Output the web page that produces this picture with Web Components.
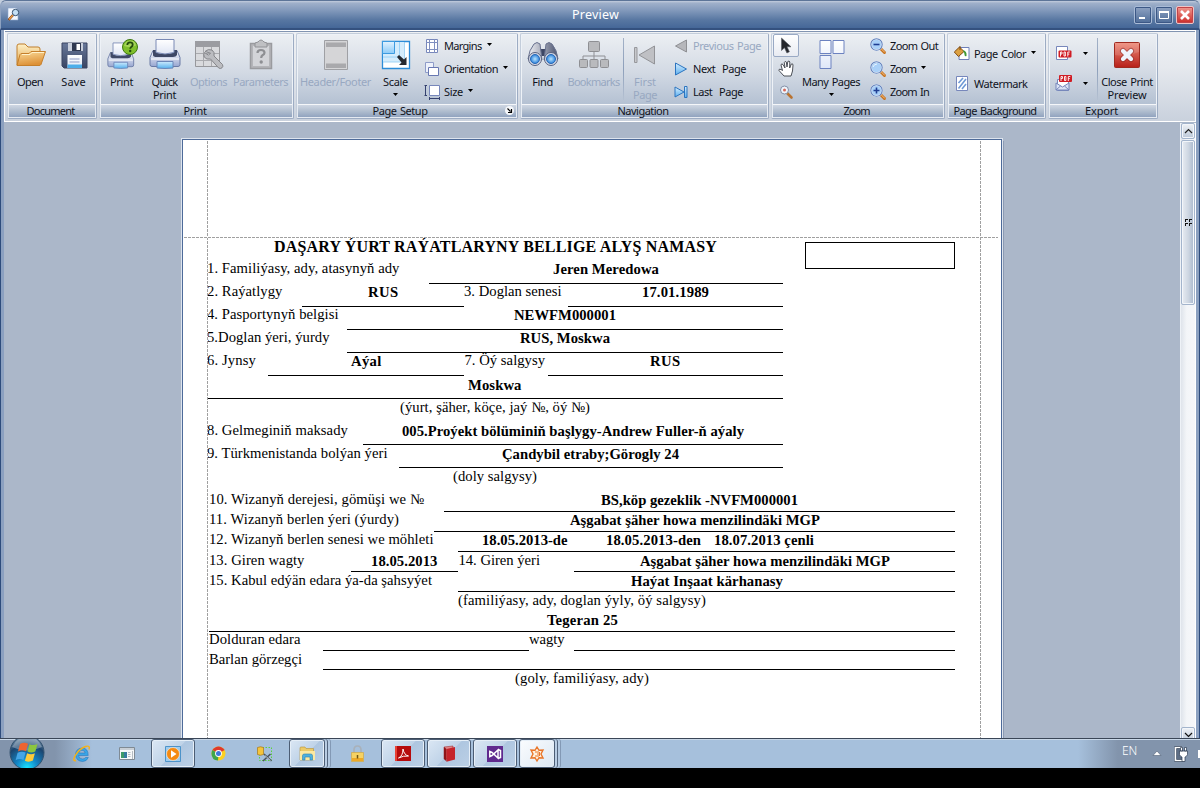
<!DOCTYPE html>
<html lang="tk">
<head>
<meta charset="utf-8">
<title>Preview</title>
<style>
html,body{margin:0;height:100%;background:#000;overflow:hidden}
body{font:11px/13px "Noto Sans",sans-serif;color:#10131c;word-spacing:1px}
</style>
</head>
<body>
<preview-desktop></preview-desktop>
<script>
const G = (id, a, b, x2 = 0, y2 = 1) => `<linearGradient id="${id}" x1="0" y1="0" x2="${x2}" y2="${y2}"><stop offset="0" stop-color="${a}"/><stop offset="1" stop-color="${b}"/></linearGradient>`;
const lens = inner => `<path d="M10.5 10.5l4 4" stroke="#c7711c" stroke-width="3" stroke-linecap="round"/><path d="M11 10.6l3.6 3.6" stroke="#f6c38a" stroke-width="1" stroke-linecap="round"/><circle cx="6.5" cy="6.5" r="5.6" fill="#a9d0f8" stroke="#fff" stroke-width="1.6"/><circle cx="6.5" cy="6.5" r="5.7" fill="none" stroke="#5b7dbb" stroke-width="1.1"/>${inner}`;
const printer = `<defs>${G('pb', '#fdfdff', '#97a6d0')}${G('pp', '#ffffff', '#dfe5f4')}${G('pt', '#cdeafd', '#56b1ee')}</defs><path d="M4 11.500h24l3 7v7q0 2-2 2H3q-2 0-2-2v-7z" fill="url(#pb)" stroke="#6a7aa5"/><path d="M4 11h24v5q-1 2-4 2H8q-4 0-4-2z" fill="#3e4866"/><path d="M7 .5h18v13q-9 3-18 0z" fill="url(#pp)" stroke="#7a8ab5"/><path d="M2 20h28" stroke="#fff"/><path d="M8 22.500h16v6.500q-8 1-16 0z" fill="url(#pt)" stroke="#6b86b8"/>`;
const pdfTag = (x, y) => `<rect x="${x}" y="${y}" width="13" height="7" rx="1" fill="#d01c24"/><path d="M${x + 2} ${y + 6}v-4.5h1.5v2h-1.5M${x + 5.5} ${y + 1.5}v4h1.4v-4zM${x + 9.3} ${y + 6}v-4.5h2M${x + 9.3} ${y + 3.6}h1.5" fill="none" stroke="#fff" stroke-width=".9"/>`;
/* name: [width, height, drawing] */
const ICONS = {
  app: [13, 15, `<path d="M1 1h8l2 2v10H1z" fill="#f4f8ff" stroke="#8fa7cc" stroke-width=".6"/><path d="M6 8l-4.500 5" stroke="#7b3c10" stroke-width="2.400"/><path d="M6 8l-4 4.500" stroke="#f0a04a" stroke-width="1.200"/><circle cx="8.500" cy="5.500" r="3.200" fill="#c5e0f6" stroke="#35506f"/>`],
  open: [31, 29, `<defs>${G('a', '#fdf0c8', '#e5a64a')}${G('b', '#fbdc9a', '#dd9137', .3)}</defs><path d="M2 25V6q0-2 2-2h6l3 3h10q2 0 2 2v16z" fill="url(#a)" stroke="#c07f2c"/><path d="M2 25.500l3-11q.5-1 2-1h7l2-2h14.500L26 24.500q-.5 1-2 1z" fill="url(#b)" stroke="#c57f2b"/><path d="M7 14.500h8l2-2h12" stroke="#fff2cb" fill="none"/>`],
  save: [32, 32, `<defs>${G('a', '#68789a', '#3a4563')}${G('p', '#ffffff', '#dfe8f6')}</defs><g transform="translate(1 1)"><path d="M3 3h25v25H5l-2-2z" fill="url(#a)" stroke="#3a4563"/><path d="M9 3h15v8H9z" fill="#c9cfdc"/><path d="M13 3h9v8h-9z" fill="#2f3850"/><path d="M17.500 4h3.500v6h-3.500z" fill="#fff"/><path d="M8.500 15h14.500v13H8.500z" fill="url(#p)"/><path d="M8.500 24.500h14.500V28H8.500z" fill="#4caeea"/><path d="M10.500 19h10M10.500 22h10" stroke="#8f9bc4"/></g>`],
  printer: [32, 32, printer],
  print: [34, 32, `<g transform="translate(2 3.500) scale(.86 .88)">${printer}</g><circle cx="25" cy="8" r="7.500" fill="#7fbf2c" stroke="#3f7a12"/><path d="M19 7q1-5 6-5.500t6 5q-6 3-12 .5z" fill="#b5e06a" opacity=".7"/><path d="M22.300 6q0-2.600 2.700-2.600t2.700 2.300q0 1.300-1.500 2.200-1 .7-1 1.900" fill="none" stroke="#234b0c" stroke-width="1.800"/><circle cx="25.200" cy="12" r="1.200" fill="#234b0c"/>`],
  options: [32, 32, `<path d="M2.500 2.500h24v25h-24z" fill="#d9dadd" stroke="#97989c"/><path d="M2 2h25v6H2z" fill="#9b9ca1"/><path d="M10.500 8v19M18.500 8v19M3 14.500h23M3 21.500h23" stroke="#a9aaae"/><path d="M12 12.500q3-3 7-1.500 3 2 2 6l8.500 8.500q1 2-.5 3.300t-3.300.2L17.500 20q-4 1-6.300-2-1-3 .3-4.500l4 2.700 2-2z" fill="#bbbcc0" stroke="#85868a"/>`],
  params: [24, 32, `<path d="M1.500 4.500h21v25h-21z" fill="#b4b5b9" stroke="#9a9b9f" stroke-width="1.500"/><path d="M4 7h16v20H4z" fill="#d3d4d8"/><path d="M6 4l3-1q3-4 6 0l3 1v4H6z" fill="#bfc0c3" stroke="#919296"/><path d="M8.500 14q0-3 3.500-3t3.500 2.700q0 1.500-2 2.600-1.300.8-1.300 2.700" fill="none" stroke="#8e8f93" stroke-width="2.200"/><circle cx="12.200" cy="23" r="1.700" fill="#8e8f93"/>`],
  header: [26, 32, `<path d="M1.500 1.500h23v29h-23z" fill="#d5d5d7" stroke="#9fa0a4"/><path d="M3 3.500h20v4.500H3zM3 24.500h20V29H3z" fill="#a9a9ac"/>`],
  scale: [30, 30, `<defs>${G('a', '#e3f3ff', '#8ccbf8')}</defs><path d="M1.500 1.500h27v27h-27z" fill="#fff" stroke="#2b8cd8" stroke-width="1.300"/><path d="M2 2h21v20H2z" fill="#d4ecfc"/><path d="M18.500 2v15H2M23.500 2v20H2" stroke="#8ecbf4" fill="none" stroke-width=".8"/><path d="M1.500 1.500h12v12h-12z" fill="url(#a)" stroke="#3d9be0"/><path d="M16 17l2-2 5 4.500 2.500-2.500V25H18l2.500-2.500z" fill="#252930"/>`],
  margins: [14, 16, `<path d="M1.500 1.500h11v13h-11z" fill="#fff" stroke="#7787bb"/><path d="M4.500 1v14M9.500 1v14M1 4.500h12M1 11.500h12" stroke="#8090c0"/>`],
  orient: [14, 14, `<path d="M.5.500h8v10h-8z" fill="#eef2fb" stroke="#8e9cc9"/><path d="M3.500 5.500h10v8h-10z" fill="#fff" stroke="#6878b2"/>`],
  size: [16, 16, `<path d="M4.500 1.500h10v10h-10z" fill="#fff" stroke="#7787bb"/><path d="M.5 1v11M-.5 1.500h2.500M-.5 11.500h2.500M4 14.500h10M4.500 13v3M14.500 13v3" stroke="#34416f"/>`],
  find: [32, 28, `<defs>${G('a', '#f3f4f8', '#4c5470', 1, 0)}<radialGradient id="l"><stop offset="0" stop-color="#b8e4ff"/><stop offset="1" stop-color="#2d82da"/></radialGradient></defs><path d="M12 8h8v7h-8z" fill="#3d4664"/><path d="M7 3q3-3 6 0l2 16-14-1q1-9 6-15zM25 3q-3-3-6 0l-2 16 14-1q-1-9-6-15z" fill="url(#a)" stroke="#69728f"/><circle cx="8" cy="18" r="6.500" fill="#d5d9e6" stroke="#59627f"/><circle cx="8" cy="18" r="4.500" fill="url(#l)" stroke="#2868b6"/><circle cx="24" cy="18" r="6.500" fill="#d5d9e6" stroke="#59627f"/><circle cx="24" cy="18" r="4.500" fill="url(#l)" stroke="#2868b6"/>`],
  marks: [32, 28, `<path d="M16 11v4M5 19v-4h22v4M16 15v4" fill="none" stroke="#8f9095"/><g fill="#b9babd" stroke="#8e8f93"><rect x="10.500" y=".5" width="11" height="10" rx="1"/><rect x="1.500" y="18.500" width="8" height="8" rx="1"/><rect x="12" y="18.500" width="8" height="8" rx="1"/><rect x="22.500" y="18.500" width="8" height="8" rx="1"/></g>`],
  first: [22, 20, `<path d="M.5 2.500h2.500v15H.5z" fill="#c7c8cc" stroke="#97989c"/><path d="M20.500 1v18L5 10z" fill="#bfc0c4" stroke="#929397"/>`],
  prev: [14, 14, `<path d="M12.500 1v12L1.500 7z" fill="#b6b7bb" stroke="#8f9094"/>`],
  next: [14, 14, `<defs>${G('a', '#d8efff', '#5aaeee')}</defs><path d="M1.500 1v12l11-6z" fill="url(#a)" stroke="#2c74bf"/>`],
  last: [14, 14, `<defs>${G('a', '#d8efff', '#5aaeee')}</defs><path d="M1 2v10l9-5z" fill="url(#a)" stroke="#2c74bf"/><path d="M10.500 1.500h2.500v11h-2.500z" fill="url(#a)" stroke="#2c74bf"/>`],
  pointer: [12, 17, `<path d="M1.500 1v12.500l3-2.800 2.400 5.300 2.500-1.200L7 9.800h4z" fill="#24262b" stroke="#555a63" stroke-width=".6"/>`],
  hand: [17, 17, `<path d="M6 16L1 10.500q-.5-2 2-1l1.500 1L3 5q.3-2 2-.5L7 8 6.300 2.500q.8-2 2-.5l.7 5 .8-5.500q1.500-1.200 2 .5L11.700 8l1.600-4q1.600-.8 1.700 1L14.500 11l-1.500 5z" fill="#fff" stroke="#3b3e46" stroke-width=".9"/>`],
  magnify: [14, 14, `<path d="M8.500 8.500l4 4" stroke="#b97331" stroke-width="2.600" stroke-linecap="round"/><circle cx="5.500" cy="5" r="4" fill="#eef5fc" stroke="#8290a8"/><circle cx="5.500" cy="5" r="1.500" fill="#d86a5c"/>`],
  pages: [26, 31, `<defs>${G('a', '#ffffff', '#dfe7f8')}</defs><g transform="translate(1.500 1)" fill="url(#a)" stroke="#6c82c0"><path d="M.5.500h11v13H.5zM13.500 .5h11v13h-11zM.5 15.500h11v13H.5z"/></g>`],
  zoomout: [16, 16, lens('<path d="M3.500 6.500h6" stroke="#1f3e93" stroke-width="1.600"/>')],
  zoom: [16, 16, lens('<path d="M3 6q1-3 4-3" stroke="#e8f5ff" fill="none"/>')],
  zoomin: [16, 16, lens('<path d="M3.500 6.500h6M6.500 3.500v6" stroke="#1f3e93" stroke-width="1.600"/>')],
  color: [16, 14, `<path d="M4.500 1.500h9.500v12H4z" fill="#fff" stroke="#6f80b8"/><path d="M-.7 6L4.500 1 9 5.500 3.500 10.500z" fill="#dca041" stroke="#7f4a12"/><path d="M5 4V0" stroke="#7f4a12"/><path d="M8 4.500q4 0 3.500 5.500-2 1-2-1.500T8 5z" fill="#3f9a34"/>`],
  water: [13, 15, `<path d="M1.500.500h11v14h-11z" fill="#fff" stroke="#7787bb"/><path d="M3.500 7L8 2M3.500 12.500L11 3M7 13l4-5" stroke="#6f9ad6" stroke-width="1.600"/>`],
  pdf: [16, 15, `<path d="M.5 .5h11v13H.5z" fill="#fff" stroke="#7787bb"/>${pdfTag(2.500, 4.500)}`],
  pdfmail: [17, 16, `<path d="M1.500 4.500h11v11h-11z" fill="#fff" stroke="#7787bb"/><path d="M0 8l6.500 4L13 8v7H0z" fill="#dbe3f5" stroke="#7787bb"/><path d="M0 15l4.500-4M13 15l-4.500-4" stroke="#7787bb"/>${pdfTag(3, 0)}`],
  close: [28, 28, `<defs>${G('a', '#ee8a78', '#b71f19')}</defs><rect x="1.500" y="1.500" width="25" height="25" rx="1" fill="url(#a)" stroke="#9f2a20"/><path d="M2 2h24v9Q14 16 2 14z" fill="#fff" opacity=".12"/><path d="M10 10l8 8M18 10l-8 8" stroke="#7b1511" stroke-width="6" stroke-linecap="round" opacity=".5"/><path d="M10 10l8 8M18 10l-8 8" stroke="#eff3fc" stroke-width="4.400" stroke-linecap="round"/>`],
  arrow: [5, 3, `<path d="M0 0h5L2.500 3z" fill="#000"/>`],
  launch: [9, 9, `<circle cx="4.500" cy="4.500" r="4.500" fill="#f5f7fa"/><path d="M2.500 2.500l3 3M6.500 3v3.500H3" stroke="#000" fill="none" stroke-width="1.200"/>`],
  orb: [36, 30, `<defs><radialGradient id="o" cx=".5" cy=".95" r=".9"><stop offset="0" stop-color="#19e4ff"/><stop offset=".35" stop-color="#1486c6"/><stop offset=".75" stop-color="#1b446e"/><stop offset="1" stop-color="#6f8ba4"/></radialGradient></defs><circle cx="18" cy="13.500" r="17" fill="url(#o)" stroke="#33526f"/><path d="M3 8Q8-2 18-2.500T33 8Q18 15 3 8z" fill="#fff" opacity=".3"/><path d="M11 5q4-2.500 8-.3l-2 7.500q-4-2-8 .2z" fill="#ee6430"/><path d="M20.500 5.200q4 1.800 8-.2l-2.200 7.400q-4 2-7.800 0z" fill="#8cc63e"/><path d="M8.600 13.800q4-2.200 8-.2l-2.200 7.400q-3.800-2-7.800.2z" fill="#44a5e6"/><path d="M18.100 14.200q4 2 7.800 0l-2 7.300q-4 2.200-8 .2z" fill="#fdcb3a"/>`],
  ie: [18, 17, `<path d="M14.500 10.500h-9q.5 3.500 4 3.500 2 0 3-1.500h2.800Q13.800 16.500 9.500 16.500 3 16 2.500 9.500 3 3.200 9.300 3q6 .3 5.900 7.500zM5.600 8h6.500Q11.800 5.300 9 5.300T5.600 8z" fill="#3aa5e6" stroke="#1c6fb8" stroke-width=".5"/><path d="M3 15.500Q-1 16.500 2 11 6 4 12.500 1.500q5-1.500 3.500 3" fill="none" stroke="#f3b21b" stroke-width="1.500"/>`],
  win: [16, 13, `<path d="M.5.500h15v12H.5z" fill="#f6f8f9" stroke="#7f8a94"/><path d="M1 1h14v2H1z" fill="#c9d0d7"/><path d="M2 5h6v6H2z" fill="#357b9f"/><path d="M2 5h3v6H2z" fill="#3d9a69"/><path d="M9 5.500h2.500M9 7.500h2.500M9 9.500h2.500M13.500 4v8" stroke="#b5bcc3"/>`],
  wmp: [16, 16, `<path d="M.5.500h15v15H.5z" fill="#9fcbec" stroke="#4d93c9"/><circle cx="8" cy="8" r="6.500" fill="#f58a12" stroke="#fff" stroke-width=".5"/><path d="M6 4.300l5.500 3.700L6 11.700z" fill="#fff"/>`],
  chrome: [15, 15, `<circle cx="7.500" cy="7.500" r="7" fill="#fbd023"/><path d="M7.500 7.500L1.400 4Q4 .5 7.500.500t6.200 3.500z" fill="#df3a2c"/><path d="M1.400 4L7.500 7.500 7 14.500Q.5 14 .5 7.500.500 5.600 1.400 4z" fill="#3ea64a"/><circle cx="7.500" cy="7.500" r="3.400" fill="#fff"/><circle cx="7.500" cy="7.500" r="2.500" fill="#3d78d8"/>`],
  sql: [16, 16, `<path d="M2.500 1.500h12v13h-12z" fill="none" stroke="#5bd23c" stroke-dasharray="1.500 1.500"/><path d="M.5 1.500q3-1.500 6 0v7q-3 1.500-6 0z" fill="#f5c43c" stroke="#a3761c" stroke-width=".7"/><path d="M6 15l7.500-7M7 8l7.500 7" stroke="#4a535f" stroke-width="1.600"/><path d="M8 9.500l5.500 5" stroke="#dfe6ee" stroke-width=".7"/>`],
  folder: [17, 15, `<path d="M1 14V2q0-1 1-1h4l1 1.500h7.500V14z" fill="#eccb68" stroke="#b79238" stroke-width=".6"/><path d="M1 5h15v9H1z" fill="#fbe9a2"/><path d="M3.500 14V9.500q0-1.500 2-1.500h6q2 0 2 1.500V14h-2.500v-3H6v3z" fill="#4db1de" stroke="#2c82b4" stroke-width=".6"/>`],
  lock: [13, 17, `<path d="M3 8V5q0-4 3.500-4T10 5v3" fill="none" stroke="#a9b1ba" stroke-width="1.700"/><path d="M.5 7.500h12v9H.5z" fill="#f6d263" stroke="#cfa23a" stroke-width=".6"/><path d="M1 13h11v3H1z" fill="#eda928"/><path d="M6.500 10v3.500" stroke="#6d5314" stroke-width="1.500"/>`],
  acrobat: [16, 15, `<path d="M0 0h16v15H0z" fill="#b60b0c"/><path d="M0 0h2v15H0z" fill="#e84236"/><path d="M3.500 12q4.500-2 4.500-9 1 6 5.500 7-5-.5-10 2z" fill="none" stroke="#fff" stroke-width="1"/>`],
  book: [13, 16, `<path d="M1 1l9-1v12l-9 1z" fill="#e2888a" stroke="#991b1f" stroke-width=".5"/><path d="M1 1l2.500 2v12.500L1 13z" fill="#8f1519"/><path d="M3.500 3L12 1v12.500l-8.500 2.300z" fill="#c5242b"/>`],
  vs: [16, 16, `<path d="M0 0h16v16H0z" fill="#602a8e"/><path d="M2.800 5.500v5l2.200-1 6-5.500v8L5 6.500zM11 3.500l2.500 1v7L11 12.500" fill="none" stroke="#fff" stroke-width="1.500"/>`],
  dx: [16, 16, `<path d="M8 1l2 3.300 4-.3-2 4 2 4-4-.3L8 15l-2-3.300-4 .3 2-4-2-4 4 .3z" fill="#fff1df" stroke="#e9762a" stroke-width="1.400"/><path d="M6 6h4M6 10h4M8 8h2.500V6M10.500 8v2" fill="none" stroke="#e9762a"/>`],
  tri: [8, 5, `<path d="M0 4.500L4 0l4 4.500z" fill="#fff" stroke="#4f5e75" stroke-width=".6"/>`],
  plug: [14, 16, `<path d="M8 2H2.500V14H9.500" fill="none" stroke="#2b3b52" stroke-width="4"/><path d="M3 3h6v10H3z" fill="#5c6d85"/><path d="M8 1.500H1.500V14.500H9" fill="none" stroke="#fff" stroke-width="1.600"/><path d="M5.500 5h8v3.500q-1 2.500-2.500 2.500V15.500H8V11q-1.500 0-2.500-2.500zM6.500 1.500h2V5h-2zM10.500 1.500h2V5h-2z" fill="#fff" stroke="#2b3b52" stroke-width=".7"/>`],
  min: [12, 12, `<path d="M2 9h6" stroke="#fff" stroke-width="2"/>`],
  max: [12, 12, `<path d="M1.500 2.500h9v7h-9z" fill="none" stroke="#fff"/><path d="M1 3h10" stroke="#fff" stroke-width="2"/>`],
  x: [12, 12, `<path d="M2 2l8 8M10 2l-8 8" stroke="#fff" stroke-width="2.600"/>`],
  up: [9, 6, `<path d="M1 5l3.500-3.500L8 5" stroke="#222" fill="none" stroke-width="1.200"/>`],
  down: [9, 6, `<path d="M1 1l3.500 3.500L8 1" stroke="#111" fill="none" stroke-width="1.200"/>`]
};
const define = (name, html) => customElements.define(name, class extends HTMLElement {
  connectedCallback() {
    if (!this.shadowRoot) this.attachShadow({mode: 'open'}).innerHTML = html(this);
  }
});
const at = (e, n, d = '') => e.getAttribute(n) ?? d;

define('ui-icon', e => {
  const [w, h, body] = ICONS[at(e, 'name')];
  return `<style>:host{display:block;flex:none;width:${w}px;height:${h}px}svg{display:block;overflow:visible}</style><svg width="${w}" height="${h}" viewBox="0 0 ${w} ${h}" fill="none">${body}</svg>`;
});

define('big-button', e => {
  const lines = at(e, 'label').split('|'), fits = at(e, 'fit').split('|');
  return `<style>:host{display:flex;flex-direction:column;align-items:center;flex:none;width:${at(e, 'w')}px;color:${e.hasAttribute('off') ? '#98a8c1' : '#10131c'}}
  .pic{height:41px;display:flex;align-items:center;justify-content:center}.l{height:13px}.a{padding-top:5px}</style>
  <div class="pic"><ui-icon name="${at(e, 'icon')}"></ui-icon></div>
  ${lines.map((l, i) => `<div class="l"><fit-text w="${fits[i]}">${l}</fit-text></div>`).join('')}
  ${e.hasAttribute('menu') ? '<div class="a"><ui-icon name="arrow"></ui-icon></div>' : ''}`;
});

define('small-button', e => `<style>:host{display:flex;align-items:center;height:var(--row,23px)}.pic{width:var(--pic,19px);flex:none}.a{margin:var(--arrow,-2px 0 0 5px)}${e.hasAttribute('off') ? ':host{color:#98a8c1}' : ''}</style>
  <div class="pic"><ui-icon name="${at(e, 'icon')}"></ui-icon></div>
  ${at(e, 'label') && `<fit-text w="${at(e, 'fit')}">${at(e, 'label')}</fit-text>`}
  ${e.hasAttribute('menu') ? '<div class="a"><ui-icon name="arrow"></ui-icon></div>' : ''}`);

define('tool-button', e => `<style>:host{display:flex;align-items:center;justify-content:center;width:26px;height:23px;box-sizing:border-box}
  :host([on]){background:linear-gradient(#fff,#e8ebf2);border:1px solid #99a9c4;border-radius:2px}</style><ui-icon name="${at(e, 'icon')}"></ui-icon>`);

define('ribbon-group', e => `<style>:host{display:flex;flex-direction:column;flex:none;width:${at(e, 'w')}px;height:86px;box-sizing:border-box;border:1px solid #9dacc3;border-top-color:#c3cddb;border-left-color:#c3cddb;border-radius:2px;background:linear-gradient(#eceff3,#d3dae4 45%,#b3c0d2 85%,#b0bdd0);box-shadow:inset 0 0 0 1px #eef2f7}
  .body{display:flex;height:70px;flex:none}
  .cap{height:12px;display:flex;align-items:center;border:1px solid #e5eaf1;border-top:1px solid #f4f6f9;background:linear-gradient(#cfd7e3,#b1becf 50%,#91a3bf)}
  .cap div{flex:1;display:flex;justify-content:center;padding-right:3px;margin-top:-2px}.cap ui-icon{margin:-1px 2px 0 0}</style>
  <div class="body"><slot></slot></div><div class="cap"><div><fit-text w="${at(e, 'fit')}">${at(e, 'caption')}</fit-text></div>${e.hasAttribute('launcher') ? '<ui-icon name="launch"></ui-icon>' : ''}</div>`);

define('ribbon-column', e => `<style>:host{display:flex;flex-direction:column;padding:${at(e, 'pad', '0 0 0 8px')};flex:none}</style><slot></slot>`);
define('ribbon-line', () => `<style>:host{width:1px;height:62px;margin:4px 0 0;background:linear-gradient(#a3b1c7,#8d9fba,#b5c1d2);flex:none}</style>`);

define('ribbon-bar', () => `<style>:host{display:flex;gap:2px;height:92px;box-sizing:border-box;padding:2px 0 0 2px;background:linear-gradient(#eff1f4,#e6e9ee 40%,#c9d1dd);border:1px solid #fff;border-bottom:1px solid #fff;box-shadow:0 1px #8294b1 inset,0 1px #fff}</style>
<ribbon-group w="90" caption="Document" fit="48">
  <big-button w="44" icon="open" label="Open" fit="26"></big-button><big-button w="43" icon="save" label="Save" fit="24.500"></big-button>
</ribbon-group>
<ribbon-group w="195" caption="Print" fit="23">
  <big-button w="43" icon="print" label="Print" fit="23"></big-button><big-button w="43" icon="printer" label="Quick|Print" fit="26|23"></big-button><big-button off w="45" icon="options" label="Options" fit="37"></big-button><big-button off w="59" icon="params" label="Parameters" fit="55"></big-button>
</ribbon-group>
<ribbon-group w="222" caption="Page Setup" fit="55" launcher>
  <big-button off w="77" icon="header" label="Header/Footer" fit="71"></big-button><big-button w="43" icon="scale" label="Scale" fit="25" menu></big-button>
  <ribbon-column><small-button icon="margins" label="Margins" fit="37.500" menu></small-button><small-button icon="orient" label="Orientation" fit="54" menu></small-button><small-button icon="size" label="Size" fit="19" menu></small-button></ribbon-column>
</ribbon-group>
<ribbon-group w="249" caption="Navigation" fit="51">
  <big-button w="43" icon="find" label="Find" fit="20.500"></big-button><big-button off w="59" icon="marks" label="Bookmarks" fit="52"></big-button><ribbon-line></ribbon-line><big-button off w="42" icon="first" label="First|Page" fit="22|24"></big-button>
  <ribbon-column pad="0 0 0 8px"><small-button off icon="prev" label="Previous Page" fit="68"></small-button><small-button icon="next" label="Next  Page" fit="53"></small-button><small-button icon="last" label="Last  Page" fit="50"></small-button></ribbon-column>
</ribbon-group>
<ribbon-group w="174" caption="Zoom" fit="26">
  <ribbon-column pad="0 0 0 1px"><tool-button on icon="pointer"></tool-button><tool-button icon="hand"></tool-button><tool-button icon="magnify"></tool-button></ribbon-column>
  <big-button w="64" icon="pages" label="Many Pages" fit="58" menu></big-button>
  <ribbon-column pad="0 0 0 7px" style="--pic:20px"><small-button icon="zoomout" label="Zoom Out" fit="48"></small-button><small-button icon="zoom" label="Zoom" fit="26" menu></small-button><small-button icon="zoomin" label="Zoom In" fit="39"></small-button></ribbon-column>
</ribbon-group>
<ribbon-group w="99" caption="Page Background" fit="83">
  <ribbon-column pad="4px 0 0 7px" style="--row:30px"><small-button icon="color" label="Page Color" fit="52" menu></small-button><small-button icon="water" label="Watermark" fit="53.500"></small-button></ribbon-column>
</ribbon-group>
<ribbon-group w="110" caption="Export" fit="33">
  <ribbon-column pad="4px 9px 0 7px" style="--row:30px;--arrow:1px 0 0 8px"><small-button icon="pdf" menu></small-button><small-button icon="pdfmail" menu></small-button></ribbon-column>
  <ribbon-line></ribbon-line><big-button w="58" icon="close" label="Close Print|Preview" fit="51.500|39"></big-button>
</ribbon-group>`);

define('caption-button', e => `<style>:host{display:flex;align-items:center;justify-content:center;width:18px;height:18px;box-sizing:border-box;border:1px solid #a9bbd6;border-radius:2px;background:linear-gradient(#8ea2c2,#4f6d99);box-shadow:0 0 0 1px #3c5886 inset}
  :host([red]){background:linear-gradient(#f09a90,#cb2b28);border-color:#f0c4c4;box-shadow:0 0 0 1px #c0444a inset}</style><ui-icon name="${at(e, 'icon')}"></ui-icon>`);

define('title-bar', () => `<style>:host{display:flex;align-items:center;height:30px;box-sizing:border-box;border:1px solid #8ea2c0;border-top:1px solid #5d7598;border-bottom:2px solid #34517f;border-radius:6px 6px 0 0;padding:0 5px 0 6px;background:linear-gradient(#c3cddd,#9fb0ca 8%,#8299bb 35%,#5877a2 70%,#456798)}
  .t{flex:1;display:flex;justify-content:center;font-size:12.500px;line-height:16px;color:#fff;padding-left:37px;padding-top:1px}.b{display:flex;gap:3px;padding-top:1px}</style>
  <ui-icon name="app"></ui-icon><div class="t"><fit-text w="47">Preview</fit-text></div>
  <div class="b"><caption-button icon="min"></caption-button><caption-button icon="max"></caption-button><caption-button red icon="x"></caption-button></div>`);

define('scroll-bar', () => `<style>:host{display:flex;flex-direction:column;width:16px;flex:none;box-sizing:border-box;border-left:1px solid #eef2f7;border-right:1px solid #fff;background:linear-gradient(90deg,#dfe4eb,#f3f5f8 40%,#f6f7fa)}
  div{box-sizing:border-box;border:1px solid #a3b4cc;border-radius:2px;box-shadow:inset 0 0 0 1px #f3f6fa;background:linear-gradient(90deg,#e8ecf2,#ccd5e1 55%,#a9b8cd);display:flex;align-items:center;justify-content:center;flex:none}
  .up,.dn{height:16px;background:linear-gradient(#eff2f6,#bcc8d8)}.th{height:165px;margin-top:1px}.dn{margin-top:auto;margin-bottom:-5px}
  i{width:7px;height:7px;background:linear-gradient(#111,#111) 0 0/3px 1px no-repeat,linear-gradient(#111,#111) 0 0/1px 3px no-repeat,linear-gradient(#111,#111) 4px 0/3px 1px no-repeat,linear-gradient(#111,#111) 4px 0/1px 3px no-repeat,linear-gradient(#111,#111) 0 4px/3px 1px no-repeat,linear-gradient(#111,#111) 0 4px/1px 3px no-repeat,linear-gradient(#111,#111) 4px 4px/3px 1px no-repeat,linear-gradient(#111,#111) 4px 4px/1px 3px no-repeat}</style>
  <div class="up"><ui-icon name="up"></ui-icon></div><div class="th"><i></i></div><div class="dn"><ui-icon name="down"></ui-icon></div>`);

/* A row: [height, cells]; a cell: [width, ruled, baseline distance from row bottom, ...[offset, fitted width, text]] */
const L = (w, dy, fit, t, off = 0) => [w, 0, dy, [off, fit, t]];
const V = (w, dy, ...texts) => [w, 1, dy, ...texts];
const cellRow = ([h, cells]) => `<div class="row" style="height:${h}px">${cells.map(([w, ruled, dy, ...ts]) => {
  let x = 0;
  return `<div class="cell${ruled ? ' ruled' : ''}" style="width:${w}px">${ts.map(([o, f, t]) => {
    const s = `<fit-text w="${f}" style="margin:${h - dy - 13}px 0 0 ${o - x}px">${t}</fit-text>`; x = o + f; return s;
  }).join('')}</div>`;
}).join('')}</div>`;
const upper = [
  [23, [[576, 2, 10, [67, 443, 'DAŞARY ÝURT RAÝATLARYNY BELLIGE ALYŞ NAMASY']]]],
  [23, [L(222, 11, 192.5, '1. Familiýasy, ady, atasynyň ady'), V(354, 10, [124, 106, 'Jeren Meredowa'])]],
  [23, [L(95, 11, 75.5, '2. Raýatlygy'), V(162, 10, [66, 30.5, 'RUS']), L(104, 11, 97.5, '3. Doglan senesi'), V(215, 10, [74, 67, '17.01.1989'])]],
  [23, [L(140, 11, 131.5, '4. Pasportynyň belgisi'), V(436, 10, [167, 102, 'NEWFM000001'])]],
  [23, [L(140, 11, 122.5, '5.Doglan ýeri, ýurdy'), V(436, 10, [173, 90, 'RUS, Moskwa'])]],
  [23, [L(61, 11, 49, '6. Jynsy'), V(196, 10, [83, 30.5, 'Aýal']), L(84, 11, 80.5, '7. Öý salgysy', .5), V(235, 10, [102, 30.5, 'RUS'])]],
  [23, [V(576, 10, [261, 53.5, 'Moskwa'])]],
  [23, [L(576, 10, 190, '(ýurt, şäher, köçe, jaý №, öý №)', 193)]],
  [23, [L(156, 10, 141, '8. Gelmeginiň maksady'), V(420, 9, [39, 342, '005.Proýekt bölüminiň başlygy-Andrew Fuller-ň aýaly'])]],
  [23, [L(192, 10, 180.5, '9. Türkmenistanda bolýan ýeri'), V(384, 9, [103, 177, 'Çandybil etraby;Görogly 24'])]],
  [23, [L(576, 10, 84, '(doly salgysy)', 246)]]
];
upper[0][1][0][2] = 9; upper[6][1][0][2] = 9;
const lower = [
  [21, [L(235, 8, 215, '10. Wizanyň derejesi, gömüşi we №'), V(511, 7, [157, 197, 'BS,köp gezeklik -NVFM000001'])]],
  [20, [L(225, 8, 190, '11. Wizanyň berlen ýeri (ýurdy)'), V(521, 7, [136, 250, 'Aşgabat şäher howa menzilindäki MGP'])]],
  [20, [L(249, 8, 224.5, '12. Wizanyň berlen senesi we möhleti'), V(497, 7, [24, 85.5, '18.05.2013-de'], [148, 95, '18.05.2013-den'], [256, 100, '18.07.2013 çenli'])]],
  [20, [L(142, 7, 95.5, '13. Giren wagty'), V(107, 6, [20, 66.5, '18.05.2013']), L(116, 7, 81.500, '14. Giren ýeri', .5), V(381, 6, [66, 250, 'Aşgabat şäher howa menzilindäki MGP'])]],
  [20, [L(249, 7, 223, '15. Kabul edýän edara ýa-da şahsyýet'), V(497, 6, [173, 152, 'Haýat Inşaat kärhanasy'])]],
  [20, [L(746, 7, 248, '(familiýasy, ady, doglan ýyly, öý salgysy)', 249)]],
  [20, [V(746, 7, [338, 71, 'Tegeran 25'])]],
  [19, [L(114, 7, 91.5, 'Dolduran edara'), V(206, 7), L(45, 7, 35.5, 'wagty'), V(381, 7)]],
  [19, [L(114, 6, 93, 'Barlan görzegçi'), V(632, 6)]],
  [20, [L(746, 7, 134, '(goly, familiýasy, ady)', 306)]]
];
define('registration-form', () => `<style>:host{display:block;font:14.670px/16px "Liberation Serif",serif;color:#000;word-spacing:0}
  .row{display:flex}.cell{display:flex;align-items:flex-start;box-sizing:border-box;height:100%;flex:none}.ruled{border-bottom:1px solid #000;font-weight:bold}
  .top{display:grid;grid-template-columns:576px 150px;column-gap:22px}.box{border:1px solid #000;height:25px;margin-top:4px}
  .top .row:first-child .cell{font-size:16px;font-weight:bold;border:0}.low{padding-left:2px}</style>
  <div class="top"><div>${upper.map(cellRow).join('')}</div><div class="box"></div></div>
  <div class="low">${lower.map(cellRow).join('')}</div>`);

define('print-page', () => `<style>:host{display:block;position:relative;width:818px;height:640px;background:#fff;border:1px solid #4e6b99;outline:1px solid #dde4ee;box-shadow:2px 2px 0 #8b9ab3}
  .in{display:flow-root;padding:98px 0 0 24px}
  .v,.h{position:absolute}.v{top:1px;bottom:0;width:1px;background:repeating-linear-gradient(#a0a0a0 0 3px,#fff 3px 4px)}.h{left:1px;right:3px;top:97px;height:1px;background:repeating-linear-gradient(90deg,#a0a0a0 0 3px,#fff 3px 4px)}</style>
  <div class="v" style="left:24px"></div><div class="v" style="left:797px"></div><div class="h"></div>
  <div class="in"><slot></slot></div>`);

define('preview-window', () => `<style>:host{display:flex;flex-direction:column;height:738px;overflow:hidden;box-sizing:border-box;background:#c3cedd}
  .frame{flex:1;min-height:0;display:flex;flex-direction:column;border-left:1px solid #2e4c7c;border-right:1px solid #2e4c7c;background:linear-gradient(90deg,#8ba0c0 0 3px,#abb7c9 3px,#abb7c9 1194px,#8ba0c0 1195px);padding:0 3px}
  .view{flex:1;min-height:0;display:flex;background:#abb7c9;padding-top:1px}
  .canvas{flex:1;overflow:hidden;padding:16px 0 0 178px}</style>
  <title-bar></title-bar><div class="frame"><ribbon-bar></ribbon-bar>
  <div class="view"><div class="canvas"><print-page><registration-form></registration-form></print-page></div><scroll-bar></scroll-bar></div></div>`);

define('task-button', e => `<style>:host{display:flex;align-items:center;justify-content:center;flex:none;width:${at(e, 'w')}px;height:29px;box-sizing:border-box}
  :host([run]){border:1px solid #4c5d74;border-radius:3px;background:linear-gradient(135deg,#dbe7f4,#bfd3e8 50%,#aec6e0 51%,#bcd0e6);box-shadow:inset 0 0 0 1px #e6eff8}
  :host([active]){background:linear-gradient(135deg,#fafcfe,#dde8f3)}
  :host([stack]){box-shadow:inset 0 0 0 1px #e6eff8,2px 0 0 #b9cde3,3px 0 0 #53657e,5px 0 0 #b4cae2,6px 0 0 #8399b5}</style><ui-icon name="${at(e, 'icon')}"></ui-icon>`);
define('task-bar', () => `<style>:host{display:flex;height:30px;box-sizing:border-box;border-top:1px solid #3a4657;box-shadow:inset 0 1px #c9d8e8;background:linear-gradient(90deg,#8294ac 0 55px,#a6c0dc 92px 1078px,#8294ac 1118px);overflow:hidden;padding-left:9px}
  .sp{flex:none}.tray{margin-left:auto;display:flex;align-items:center}.en{color:#fff;font-size:12px;line-height:14px;margin:-6px 16px 0 0;font-weight:300}.end{width:2px;height:8px;background:#fff;margin-left:10px}</style>
  <ui-icon name="orb"></ui-icon><task-button w="74" icon="ie"></task-button><task-button w="15" icon="win"></task-button><div class="sp" style="width:17px"></div>
  <task-button run w="44" icon="wmp"></task-button><task-button w="47" icon="chrome"></task-button><task-button w="46" icon="sql"></task-button><div class="sp" style="width:1px"></div>
  <task-button run stack w="36" icon="folder"></task-button><div class="sp" style="width:10px"></div><task-button w="44" icon="lock"></task-button><div class="sp" style="width:2px"></div>
  <task-button run w="44" icon="acrobat"></task-button><div class="sp" style="width:2px"></div><task-button run w="44" icon="book"></task-button><div class="sp" style="width:2px"></div><task-button run w="44" icon="vs"></task-button><div class="sp" style="width:2px"></div><task-button run active stack w="36" icon="dx"></task-button>
  <div class="tray"><div class="en"><fit-text w="15">EN</fit-text></div><ui-icon name="tri"></ui-icon><ui-icon name="plug" style="margin-left:13px"></ui-icon><div class="end"></div></div>`);

define('preview-desktop', () => `<style>:host{display:block;width:1200px;height:788px;background:#000;overflow:hidden}</style><preview-window></preview-window><task-bar></task-bar>`);

/* Text whose letter spacing is adjusted so that the run takes the given width. */
customElements.define('fit-text', class extends HTMLElement {
  connectedCallback() {
    if (this.shadowRoot) return;
    this.attachShadow({mode: 'open'}).innerHTML = `<style>:host{display:block;flex:none;white-space:pre;width:max-content}</style><slot></slot>`;
    const w = +this.getAttribute('w'), real = this.getBoundingClientRect().width;
    if (w && real) {
      this.style.letterSpacing = ((w - real) / this.textContent.length).toFixed(3) + 'px';
      this.style.width = w + 'px';
    }
  }
});
</script>
</body>
</html>
